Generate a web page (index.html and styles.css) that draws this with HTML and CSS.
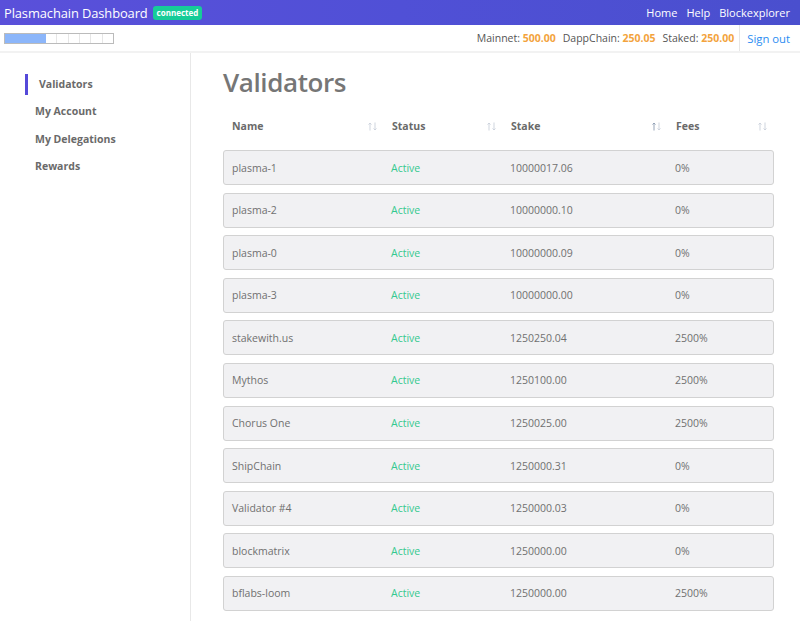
FILE: index.html
```html
<!DOCTYPE html>
<html>
<head>
<meta charset="utf-8">
<link rel="stylesheet" href="styles.css">
</head>
<body>
<header class="topbar">
  <div class="brand">
    <span class="brand-title">Plasmachain Dashboard</span>
    <span class="badge">connected</span>
  </div>
  <nav class="toplinks">
    <a>Home</a><a>Help</a><a>Blockexplorer</a>
  </nav>
</header>
<div class="subbar">
  <div class="progress">
    <span class="seg on"></span><span class="seg on"></span><span class="seg on"></span><span class="seg on"></span>
    <span class="seg"></span><span class="seg"></span><span class="seg"></span><span class="seg"></span><span class="seg"></span><span class="seg last"></span>
  </div>
  <div class="balances">
    <span class="bal">Mainnet: <b>500.00</b></span>
    <span class="bal">DappChain: <b>250.05</b></span>
    <span class="bal">Staked: <b>250.00</b></span>
    <span class="signout">Sign out</span>
  </div>
</div>
<div class="layout">
  <aside class="sidebar">
    <a class="side-item active">Validators</a>
    <a class="side-item">My Account</a>
    <a class="side-item">My Delegations</a>
    <a class="side-item">Rewards</a>
  </aside>
  <main class="main">
    <h1 class="title">Validators</h1>
    <div class="thead">
      <div class="th">Name<svg class="sort" viewBox="0 0 9 9"><path d="M2 8.5V1M0.5 2.5L2 1L3.5 2.5" /><path d="M7 0.5V8M5.5 6.5L7 8L8.5 6.5" /></svg></div>
      <div class="th">Status<svg class="sort" viewBox="0 0 9 9"><path d="M2 8.5V1M0.5 2.5L2 1L3.5 2.5" /><path d="M7 0.5V8M5.5 6.5L7 8L8.5 6.5" /></svg></div>
      <div class="th">Stake<svg class="sort sorted" viewBox="0 0 9 9"><path class="dk" d="M2 8.5V1M0.5 2.5L2 1L3.5 2.5" /><path d="M7 0.5V8M5.5 6.5L7 8L8.5 6.5" /></svg></div>
      <div class="th">Fees<svg class="sort" viewBox="0 0 9 9"><path d="M2 8.5V1M0.5 2.5L2 1L3.5 2.5" /><path d="M7 0.5V8M5.5 6.5L7 8L8.5 6.5" /></svg></div>
    </div>
    <div class="rows">
      <div class="row"><span>plasma-1</span><span class="active">Active</span><span>10000017.06</span><span>0%</span></div>
      <div class="row"><span>plasma-2</span><span class="active">Active</span><span>10000000.10</span><span>0%</span></div>
      <div class="row"><span>plasma-0</span><span class="active">Active</span><span>10000000.09</span><span>0%</span></div>
      <div class="row"><span>plasma-3</span><span class="active">Active</span><span>10000000.00</span><span>0%</span></div>
      <div class="row"><span>stakewith.us</span><span class="active">Active</span><span>1250250.04</span><span>2500%</span></div>
      <div class="row"><span>Mythos</span><span class="active">Active</span><span>1250100.00</span><span>2500%</span></div>
      <div class="row"><span>Chorus One</span><span class="active">Active</span><span>1250025.00</span><span>2500%</span></div>
      <div class="row"><span>ShipChain</span><span class="active">Active</span><span>1250000.31</span><span>0%</span></div>
      <div class="row"><span>Validator #4</span><span class="active">Active</span><span>1250000.03</span><span>0%</span></div>
      <div class="row"><span>blockmatrix</span><span class="active">Active</span><span>1250000.00</span><span>0%</span></div>
      <div class="row"><span>bflabs-loom</span><span class="active">Active</span><span>1250000.00</span><span>2500%</span></div>
    </div>
  </main>
</div>
</body>
</html>
```
FILE: styles.css
```css
* { box-sizing: border-box; }
html, body { margin: 0; padding: 0; }
body {
  font-family: "Open Sans", "Noto Sans", sans-serif;
  color: #666;
  background: #fff;
  overflow: hidden;
}
.topbar {
  height: 25px;
  background: linear-gradient(90deg, #5a50da 0%, #5050d6 50%, #4a4fce 100%);
  display: flex;
  align-items: center;
  justify-content: space-between;
  padding: 0 10px 0 4px;
}
.brand { display: flex; align-items: center; gap: 5px; }
.brand-title {
  color: #fff;
  font-size: 12.9px;
  letter-spacing: -0.1px;
}
.badge {
  background: #16cc98;
  color: #fff;
  font-size: 8px;
  font-weight: 700;
  padding: 1px 4px 2px;
  border-radius: 3px;
  line-height: 11px;
}
.toplinks { display: flex; gap: 9px; }
.toplinks a {
  color: #fff;
  font-size: 11px;
}
.subbar {
  height: 28px;
  display: flex;
  align-items: center;
  justify-content: space-between;
  padding: 0 10px 0 4px;
  border-bottom: 2px solid #f2f2f2;
}
.progress {
  display: flex;
  width: 110px;
  height: 11px;
  border: 1px solid #bbb;
}
.seg {
  flex: 1;
  border-right: 1px solid #e6e6e6;
  background: #fff;
}
.seg.on { background: #8cb6fa; border-right: none; }
.seg.last { border-right: none; }
.balances {
  display: flex;
  align-items: center;
  height: 100%;
  font-size: 10.5px;
  color: #555;
}
.bal { margin-left: 7px; }
.bal b { color: #f3a33d; font-weight: 700; }
.signout {
  color: #2b8cf2;
  font-size: 11.3px;
  margin-left: 5px;
  padding-left: 7px;
  border-left: 1px solid #e6e6e6;
  height: 100%;
  display: flex;
  align-items: center;
}
.layout {
  display: flex;
  height: 568px;
}
.sidebar {
  width: 191px;
  border-right: 1px solid #e8e8e8;
  padding: 18px 0 0 25px;
  display: flex;
  flex-direction: column;
}
.side-item {
  font-size: 10.5px;
  font-weight: 700;
  color: #6a6a6a;
  height: 27.5px;
  line-height: 27.5px;
  padding-left: 10px;
}
.side-item.active {
  border-left: 3px solid #5549d9;
  height: 21px;
  line-height: 21px;
  margin-bottom: 3px;
  margin-top: 3px;
  padding-left: 11px;
}
.main {
  flex: 1;
  padding: 12px 0 0 32px;
}
.title {
  margin: 0;
  font-size: 26px;
  font-weight: 600;
  color: #767676;
  line-height: 34px;
  letter-spacing: -0.4px;
}
.thead {
  display: grid;
  grid-template-columns: 160px 119px 165px 106px;
  width: 550px;
  margin-top: 14px;
  height: 26px;
  align-items: center;
}
.th {
  font-size: 10.5px;
  font-weight: 700;
  color: #6a6a6a;
  padding-left: 9px;
  display: flex;
  justify-content: space-between;
  align-items: center;
  padding-right: 6px;
}
.sort {
  width: 9px;
  height: 9px;
  fill: none;
  stroke: #c9d0da;
  stroke-width: 0.9;
}
.sort .dk { stroke: #8a9ab0; }
.rows {
  margin-top: 11px;
  width: 551px;
  display: flex;
  flex-direction: column;
  gap: 7.6px;
}
.row {
  display: grid;
  grid-template-columns: 159px 119px 165px 106px;
  height: 35px;
  align-items: center;
  background: #f1f1f3;
  border: 1px solid #d2d2d2;
  border-radius: 3px;
  font-size: 10.5px;
  color: #707070;
}
.row span { padding-left: 8px; }
.row .active { color: #34c98f; }
```
